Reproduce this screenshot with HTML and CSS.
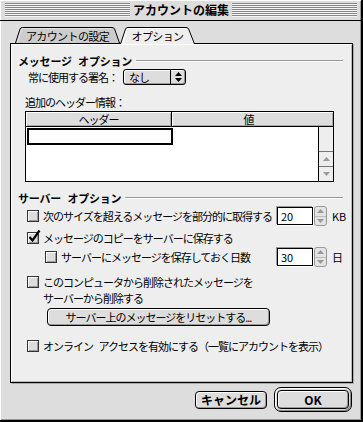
FILE: index.html
```html
<!DOCTYPE html>
<html lang="ja">
<head>
<meta charset="utf-8">
<title>アカウントの編集</title>
<link rel="stylesheet" href="styles.css">
</head>
<body>
<div class="window">
  <div class="titlebar">
    <div class="stripes"></div>
    <div class="title">アカウントの編集</div>
    <div class="stripes"></div>
  </div>
  <div class="body">
    <div class="tabs">
      <div class="tab tab-1">
        <svg class="tab-shape" width="105" height="16" viewBox="0 0 105 16"><path d="M0.5 16 L5 2 Q5.6 0.5 7.5 0.5 L97 0.5 Q99 0.5 99.6 2 L104.5 16" fill="#cccccc" stroke="#000" stroke-width="1"/><path d="M2.5 15.5 L6.5 2.5 Q7 1.5 8.2 1.5 L96 1.5" fill="none" stroke="#e6e6e6" stroke-width="1"/></svg>
        <span class="tab-label">アカウントの設定</span>
      </div>
      <div class="tab tab-2">
        <svg class="tab-shape" width="75" height="17" viewBox="0 0 75 17"><path d="M0.5 17 L5.5 2 Q6.1 0.5 8 0.5 L66 0.5 Q68 0.5 68.6 2 L74.5 17" fill="#eeeeee" stroke="#000" stroke-width="1"/><path d="M2.5 17 L6.8 2.8 Q7.2 1.5 8.6 1.5 L65.5 1.5" fill="none" stroke="#fff" stroke-width="1"/></svg>
        <span class="tab-label">オプション</span>
      </div>
    </div>
    <div class="panel">
      <div class="group-head"><span class="group-title">メッセージ オプション</span><span class="rule"></span></div>
      <div class="sig-row">
        <span class="sig-label">常に使用する署名：</span>
        <div class="popup">
          <span class="popup-value">なし</span>
          <span class="popup-arrows"><svg width="7" height="10" viewBox="0 0 7 10"><path d="M3.5 0 L7 4 L0 4Z M0 6 L7 6 L3.5 10Z" fill="#000"/></svg></span>
        </div>
      </div>
      <div class="field-label">追加のヘッダー情報：</div>
      <div class="table">
        <div class="thead">
          <div class="th th-1">ヘッダー</div>
          <div class="th th-2">値</div>
        </div>
        <div class="tbody">
          <div class="rows"><div class="cell-edit"></div></div>
          <div class="scrollbar">
            <div class="sb-track"></div>
            <div class="sb-btn"><svg width="7" height="4" viewBox="0 0 7 4"><path d="M3.5 0 L7 4 L0 4Z" fill="#999"/></svg></div>
            <div class="sb-btn"><svg width="7" height="4" viewBox="0 0 7 4"><path d="M0 0 L7 0 L3.5 4Z" fill="#999"/></svg></div>
          </div>
        </div>
      </div>
      <div class="group-head group-head-2"><span class="group-title">サーバー オプション</span><span class="rule"></span></div>
      <div class="opt-row opt-num">
        <span class="check"></span>
        <span class="opt-text">次のサイズを超えるメッセージを部分的に取得する</span>
        <span class="textfield">20</span>
        <span class="stepper"><span class="step"><svg width="7" height="4" viewBox="0 0 7 4"><path d="M3.5 0 L7 4 L0 4Z" fill="#999"/></svg></span><span class="step"><svg width="7" height="4" viewBox="0 0 7 4"><path d="M0 0 L7 0 L3.5 4Z" fill="#999"/></svg></span></span>
        <span class="unit">KB</span>
      </div>
      <div class="opt-row opt-plain">
        <span class="check checked"><svg class="checkmark" width="14" height="15" viewBox="0 0 14 15"><path d="M2.5 8 L5.5 11.5 L12.5 1.5" fill="none" stroke="#000" stroke-width="2.2"/></svg></span>
        <span class="opt-text">メッセージのコピーをサーバーに保存する</span>
      </div>
      <div class="opt-row opt-num opt-indent">
        <span class="check"></span>
        <span class="opt-text">サーバーにメッセージを保存しておく日数</span>
        <span class="textfield">30</span>
        <span class="stepper"><span class="step"><svg width="7" height="4" viewBox="0 0 7 4"><path d="M3.5 0 L7 4 L0 4Z" fill="#999"/></svg></span><span class="step"><svg width="7" height="4" viewBox="0 0 7 4"><path d="M0 0 L7 0 L3.5 4Z" fill="#999"/></svg></span></span>
        <span class="unit">日</span>
      </div>
      <div class="opt-row opt-multi">
        <span class="check"></span>
        <span class="opt-text">このコンピュータから削除されたメッセージを<br>サーバーから削除する</span>
      </div>
      <button class="btn btn-reset">サーバー上のメッセージをリセットする...</button>
      <div class="opt-row opt-plain opt-last">
        <span class="check"></span>
        <span class="opt-text">オンライン アクセスを有効にする（一覧にアカウントを表示）</span>
      </div>
    </div>
    <div class="actions">
      <button class="btn btn-cancel">キャンセル</button>
      <div class="default-ring"><button class="btn btn-ok">OK</button></div>
    </div>
  </div>
</div>
</body>
</html>
```
FILE: styles.css
```css
html, body {
  margin: 0;
  padding: 0;
  background: #000;
}
body {
  font-family: "Noto Sans CJK JP", "Noto Sans", sans-serif;
  font-size: 11px;
  letter-spacing: -1px;
  word-spacing: 4px;
  color: #000;
}
.window {
  width: 361px;
  height: 420px;
  background: #dddddd;
  border-right: 2px solid #000;
  border-bottom: 2px solid #000;
  box-shadow: inset 1px 1px #ffffff, inset -1px -1px #999999;
  display: flex;
  flex-direction: column;
}
.titlebar {
  height: 21px;
  box-sizing: border-box;
  padding: 3px 4px 0 5px;
  display: flex;
  align-items: flex-start;
  gap: 3px;
  border-bottom: 1px solid #000;
}
.stripes {
  flex: 1;
  height: 14px;
  background: repeating-linear-gradient(to bottom, #888888 0 1px, #f4f4f4 1px 2px);
}
.title {
  font-weight: bold;
  font-size: 12px;
  letter-spacing: 0;
  line-height: 14px;
}
.body {
  padding: 6px 8px 0 10px;
}
.tabs {
  display: flex;
  height: 16px;
  padding-left: 5px;
  position: relative;
  z-index: 1;
}
.tab {
  position: relative;
  height: 16px;
  display: flex;
  justify-content: center;
}
.tab-1 { width: 105px; }
.tab-2 { width: 75px; height: 17px; }
.tab-shape {
  position: absolute;
  left: 0;
  top: 0;
}
.tab-label {
  position: relative;
  line-height: 18px;
  letter-spacing: -0.6px;
}
.panel {
  height: 340px;
  box-sizing: border-box;
  border: 1px solid #000;
  background: #eeeeee;
  box-shadow: inset 1px 1px #ffffff, inset -1px -1px #bbbbbb, 1px 1px #aaaaaa;
  display: flex;
  flex-direction: column;
}
.group-head {
  display: flex;
  align-items: center;
  height: 14px;
  margin: 10px 9px 0 7px;
  gap: 4px;
}
.group-head-2 { margin-top: 9px; }
.group-title {
  font-weight: bold;
  line-height: 14px;
  letter-spacing: -0.2px;
}
.rule {
  flex: 1;
  border-top: 1px solid #999999;
  border-bottom: 1px solid #ffffff;
}
.sig-row {
  display: flex;
  align-items: center;
  height: 18px;
  padding-left: 17px;
}
.sig-label { width: 95px; white-space: nowrap; }
.popup {
  width: 63px;
  height: 16px;
  box-sizing: border-box;
  border: 1px solid #000;
  border-radius: 3px;
  background: #dddddd;
  box-shadow: inset 1px 1px #ffffff, inset -1px -1px #999999;
  display: flex;
}
.popup-value {
  flex: 1;
  padding-left: 5px;
  line-height: 14px;
}
.popup-arrows {
  width: 14px;
  border-left: 1px solid #000;
  display: flex;
  align-items: center;
  justify-content: center;
}
.field-label {
  margin: 9px 0 0 14px;
  line-height: 14px;
}
.table {
  margin: 2px 0 0 14px;
  width: 309px;
  height: 71px;
  box-sizing: border-box;
  border: 1px solid #000;
  display: flex;
  flex-direction: column;
}
.thead {
  display: flex;
  height: 15px;
  box-sizing: border-box;
  border-bottom: 1px solid #000;
}
.th {
  background: #dddddd;
  box-shadow: inset 1px 1px #ffffff, inset -1px -1px #aaaaaa;
  text-align: center;
  line-height: 15px;
}
.th-1 {
  width: 145px;
  border-right: 1px solid #000;
}
.th-2 { flex: 1; padding-right: 8px; }
.tbody {
  flex: 1;
  display: flex;
}
.rows {
  flex: 1;
  background: #ffffff;
  padding: 1px 0 0 1px;
}
.cell-edit {
  width: 146px;
  height: 17px;
  box-sizing: border-box;
  border: 2px solid #000;
}
.scrollbar {
  width: 15px;
  box-sizing: border-box;
  border-left: 1px solid #000;
  background: #eeeeee;
  display: flex;
  flex-direction: column;
}
.sb-track { flex: 1; }
.sb-btn {
  height: 15px;
  box-sizing: border-box;
  border-top: 1px solid #777777;
  display: flex;
  align-items: center;
  justify-content: center;
}
.opt-row {
  display: flex;
  align-items: center;
  padding-left: 16px;
}
.opt-num {
  height: 20px;
  margin-top: 1px;
}
.opt-plain {
  height: 16px;
  margin-top: 4px;
}
.opt-indent { padding-left: 34px; }
.opt-multi {
  margin-top: 7px;
  align-items: flex-start;
}
.opt-multi .check { margin-top: 2px; }
.opt-last { margin-top: 12px; }
.check {
  position: relative;
  flex: none;
  width: 12px;
  height: 12px;
  box-sizing: border-box;
  border: 1px solid #333333;
  background: #dddddd;
  box-shadow: inset 1px 1px #ffffff, inset -1px -1px #999999;
  margin-right: 4px;
}
.checkmark {
  position: absolute;
  left: -1px;
  top: -4px;
}
.opt-text {
  flex: 1;
  line-height: 16px;
  white-space: nowrap;
}
.textfield {
  flex: none;
  width: 36px;
  height: 18px;
  box-sizing: border-box;
  border: 1px solid #000;
  background: #ffffff;
  box-shadow: -1px -1px 0 #999999, 1px 1px 0 #ffffff;
  padding-left: 3px;
  line-height: 16px;
  letter-spacing: 0;
}
.stepper {
  flex: none;
  width: 13px;
  height: 20px;
  box-sizing: border-box;
  margin-left: 1px;
  border: 1px solid #999999;
  border-radius: 3px;
  background: #e4e4e4;
  display: flex;
  flex-direction: column;
}
.step {
  flex: 1;
  display: flex;
  align-items: center;
  justify-content: center;
}
.step + .step { border-top: 1px solid #bbbbbb; }
.unit {
  flex: none;
  width: 20px;
  margin-left: 5px;
  line-height: 16px;
  letter-spacing: 0;
}
.btn {
  font-family: inherit;
  font-size: 11px;
  letter-spacing: -1px;
  color: #000;
  padding: 0;
  margin: 0;
  box-sizing: border-box;
  border: 1px solid #000;
  border-radius: 4px;
  background: #dddddd;
  box-shadow: inset 1px 1px #ffffff, inset -1px -1px #999999;
  line-height: 16px;
  text-align: center;
}
.btn-reset {
  align-self: flex-start;
  margin: 2px 0 0 36px;
  width: 223px;
  height: 18px;
}
.actions {
  margin-top: 4px;
  height: 25px;
  display: flex;
  align-items: center;
  justify-content: flex-end;
  gap: 7px;
  padding-right: 1px;
}
.btn-cancel {
  width: 72px;
  height: 18px;
  font-weight: bold;
  font-size: 12px;
  letter-spacing: 0;
}
.default-ring {
  width: 78px;
  height: 25px;
  box-sizing: border-box;
  border: 1px solid #000;
  border-radius: 7px;
  background: #dddddd;
  box-shadow: inset 1px 1px #ffffff, inset -1px -1px #888888;
  padding: 2px;
  display: flex;
}
.btn-ok {
  flex: 1;
  font-weight: bold;
  font-size: 12px;
  letter-spacing: 0;
  border-radius: 4px;
}
```
